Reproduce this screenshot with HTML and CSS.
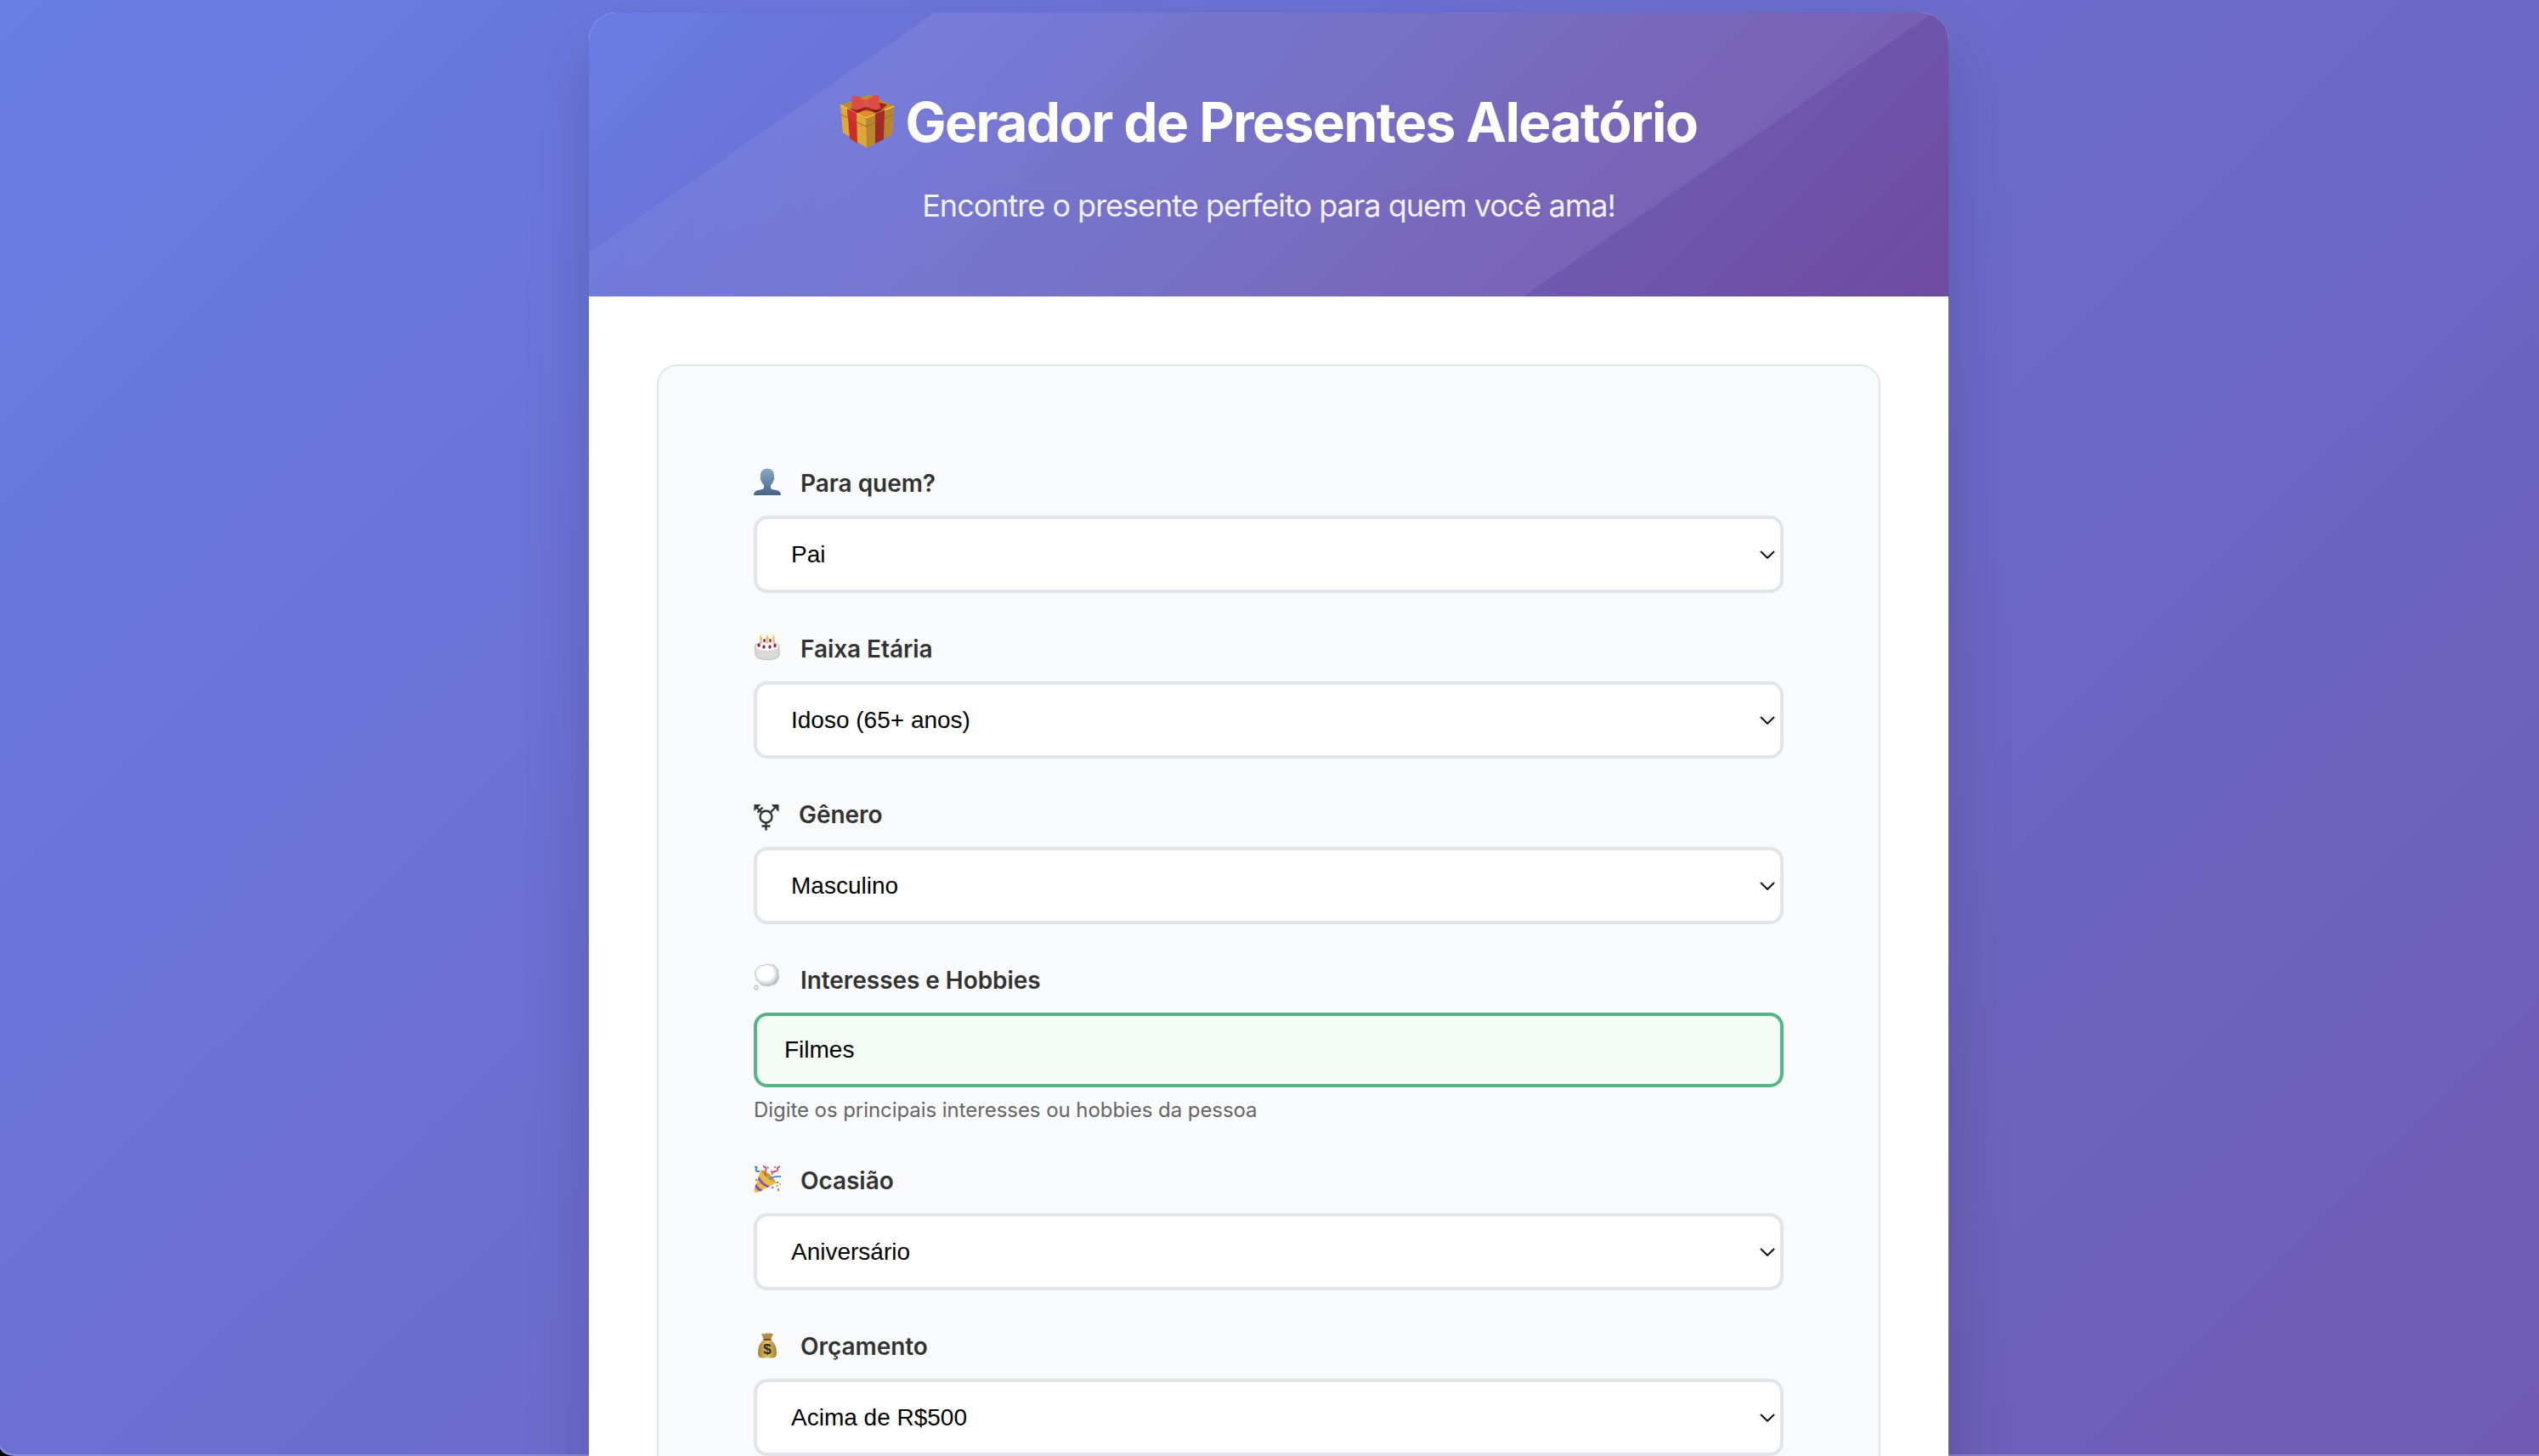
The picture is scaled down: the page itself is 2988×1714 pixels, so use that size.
FILE: index.html
```html
<!DOCTYPE html>
<html lang="pt-BR">
<head>
<meta charset="utf-8">
<title>Gerador de Presentes Aleatório</title>
<link rel="stylesheet" href="styles.css">
</head>
<body>
<div class="page">
<main class="container">
  <header class="header">
    <h1 class="title">
      <svg class="gift" viewBox="0 0 64 64">
        <path d="M0 13 32 1 63 14 61 47 31 63 3 45Z" fill="#d6a03a"/>
        <path d="M0 13 30 26 31 63 3 45Z" fill="#dea73c"/>
        <path d="M30 26 63 14 61 47 31 63Z" fill="#b98630"/>
        <path d="M0 13 34 0 63 14 30 29Z" fill="#bd8c2d"/>
        <path d="M10 18 36 7 55 12 45 22 30 29Z" fill="#a5201f"/>
        <path d="M19 23 31 17 41 22 30 28Z" fill="#e08b2f"/>
        <path d="M8 17 19 22 20 58 11 52Z" fill="#c92f29"/>
        <path d="M41 22 52 18 51 53 41 58Z" fill="#9e2b27"/>
        <path d="M1 24 30 38 62 24" fill="none" stroke="#9b6c20" stroke-width="1"/>
        <path d="M0 13 30 28 63 14" fill="none" stroke="#f1ca45" stroke-width="1.4"/>
        <path d="M8 17 19 22 19 34 9 29Z" fill="#cf3430"/>
        <path d="M41 23 52 18 52 30 41 34Z" fill="#a32b28"/>
        <path d="M30 17 36 19 48 17 44 21 30 19 16 20Z" fill="#5e1a14" opacity=".6"/>
        <path d="M14 3Q16-1 29 7V15Q20 20 13 17Z" fill="#dc4b46"/>
        <path d="M45 1Q42-1 31 7V15Q40 20 47 17Z" fill="#dc4b46"/>
        <circle cx="30" cy="10.500" r="4.500" fill="#e0534c"/>
      </svg>
      <span>Gerador de Presentes Aleatório</span>
    </h1>
    <p class="subtitle"><span>Encontre o presente perfeito para quem você ama!</span></p>
  </header>
  <form class="form">
    <div class="field">
      <div class="label">
        <svg class="icon" viewBox="0 0 32 32">
          <defs><linearGradient id="bust" x1="0" y1="0" x2="0" y2="1"><stop offset="0" stop-color="#88a8c6"/><stop offset="1" stop-color="#476488"/></linearGradient></defs>
          <path d="M16 .5C21 .5 24 4 24 9V11Q25 13 23.500 14.500 22.500 18 20 20V23Q20 24.500 22 25L27.500 26.300Q32 27.500 32 32H0Q0 27.500 4.500 26.300L10 25Q12 24.500 12 23V20Q9.500 18 8.500 14.500 7 13 8 11V9C8 4 11 .5 16 .5Z" fill="url(#bust)"/>
        </svg>
        <span>Para quem?</span>
      </div>
      <div class="select"><span>Pai</span><svg class="chevron" viewBox="0 0 18 10"><path d="M1 1 9 8.800 17 1"/></svg></div>
    </div>
    <div class="field">
      <div class="label">
        <svg class="icon icon-cake" viewBox="0 0 32 32">
          <path d="M1.500 14Q2 9 16 9T30 14V24Q29 29.500 16 29.500T2 24Z" fill="#dcdad8" stroke="#aaa6a2" stroke-width=".7"/>
          <ellipse cx="16" cy="14" rx="13" ry="5" fill="#fff"/>
          <path d="M8.500 3V11M16 3V11M23.500 3V11" stroke="#cfcbb0" stroke-width="3"/>
          <path d="M8.500 0 10 3.500Q10.500 5.500 8.500 5.500T7 3.500ZM16 0 17.500 3.500Q18 5.500 16 5.500T14.500 3.500ZM23.500 0 25 3.500Q25.500 5.500 23.500 5.500T22 3.500Z" fill="#e9cd4c"/>
          <g fill="#a51c39"><ellipse cx="12.500" cy="7" rx="1.400" ry="2"/><ellipse cx="19.500" cy="7" rx="1.400" ry="2"/><ellipse cx="6" cy="12.500" rx="1.700" ry="2.300"/><ellipse cx="12" cy="14.500" rx="1.700" ry="2.300"/><ellipse cx="19" cy="14.500" rx="1.700" ry="2.300"/><ellipse cx="25" cy="13" rx="1.700" ry="2.300"/></g>
        </svg>
        <span>Faixa Etária</span>
      </div>
      <div class="select"><span>Idoso (65+ anos)</span><svg class="chevron" viewBox="0 0 18 10"><path d="M1 1 9 8.800 17 1"/></svg></div>
    </div>
    <div class="field">
      <div class="label label-gender">
        <svg class="icon icon-gender" viewBox="0 0 30 32">
          <g fill="none" stroke="#333" stroke-width="2.400"><circle cx="14.500" cy="15.500" r="7"/><path d="M14.500 22.500V31.500M9.500 26.500H19.500M19.500 10.500 27 3M9.500 10.500 3 4M4.500 10.500 10.500 4.500"/></g>
          <path d="M.5 1H8.500L.5 9ZM29.500 1V9.500L26.500 7.500V4H23L21 1Z" fill="#333"/>
        </svg>
        <span>Gênero</span>
      </div>
      <div class="select"><span>Masculino</span><svg class="chevron" viewBox="0 0 18 10"><path d="M1 1 9 8.800 17 1"/></svg></div>
    </div>
    <div class="field">
      <div class="label">
        <svg class="icon icon-cloud" viewBox="0 0 32 32">
          <defs><radialGradient id="cloud" cx=".43" cy=".4" r=".6"><stop offset=".55" stop-color="#fff"/><stop offset="1" stop-color="#b9babd"/></radialGradient></defs>
          <path d="M5 4Q8 .5 12 1.500 15-1 19 1 25 0 26 4 30 6 28.500 11 31 16 28 19 27 24 22 24 18 27 14 25 8 26 7 21 2 20 2.500 14 0 8 5 4Z" fill="url(#cloud)" stroke="#b5b6b9" stroke-width=".8"/>
          <circle cx="3" cy="27.500" r="2.300" fill="#f2f2f2" stroke="#999" stroke-width=".8"/>
        </svg>
        <span>Interesses e Hobbies</span>
      </div>
      <div class="input">Filmes</div>
      <small class="help"><span>Digite os principais interesses ou hobbies da pessoa</span></small>
    </div>
    <div class="field">
      <div class="label">
        <svg class="icon" viewBox="0 0 32 32">
          <path d="M8.500 5Q20 8 26.500 20.500L5 31.500Q0 33 .5 28.500Z" fill="#e5bd42"/>
          <path d="M8.500 5Q20 8 26.500 20.500L21 18Q12 13 8.500 5Z" fill="#c99c30"/>
          <path d="M6.500 13Q10 21 19 24.500L16 26Q8 22 5 16ZM3 21.500Q5 26.500 10.500 29L7.500 30.500Q3 28.500 1.500 25Z" fill="#8a48c4"/>
          <g fill="none" stroke-width="1.800"><path d="M1 2Q5 1 3 4T7 7" stroke="#3f6fd8"/><path d="M11 1Q16 2 14 6T15 12M22 11Q21 7 25 7T28 3L31 1" stroke="#dc4766"/><path d="M18 16Q24 12 32 13" stroke="#5487dc"/></g>
          <path d="M15.500 1.500h2v2h-2z" fill="#4b7ce0"/><path d="M20 6h2v2h-2zM24 1h2v2h-2zM2 16h2v2H2zM28 27h2v3h-2z" fill="#df6d83"/><path d="M27 19h2v2h-2zM21 25h2v2h-2z" fill="#4b7ce0"/><path d="M30 21h2v2h-2zM26 23h3v2h-3z" fill="#e2b45a"/>
        </svg>
        <span>Ocasião</span>
      </div>
      <div class="select"><span>Aniversário</span><svg class="chevron" viewBox="0 0 18 10"><path d="M1 1 9 8.800 17 1"/></svg></div>
    </div>
    <div class="field">
      <div class="label">
        <svg class="icon icon-bag" viewBox="0 0 32 32">
          <defs><linearGradient id="bag"><stop offset="0" stop-color="#a3802c"/><stop offset=".5" stop-color="#e6c562"/><stop offset="1" stop-color="#a67d2b"/></linearGradient></defs>
          <path d="M12 9H20Q27 14 27 25 27 30.500 22 30.500H10Q5 30.500 5 25 5 14 12 9Z" fill="url(#bag)"/>
          <path d="M9 2 13 2.500 15 1 17 2.500 19 1 20 2 23 2 20 9H12Z" fill="#b28b43"/>
          <path d="M11.500 9H20.500" stroke="#76501f" stroke-width="2"/>
          <text class="dollar" x="16" y="26" text-anchor="middle">$</text>
        </svg>
        <span>Orçamento</span>
      </div>
      <div class="select"><span>Acima de R$500</span><svg class="chevron" viewBox="0 0 18 10"><path d="M1 1 9 8.800 17 1"/></svg></div>
    </div>
  </form>
</main>
<svg class="corner" viewBox="0 0 18 18"><path d="M0 9Q3 17 18 18H0Z"/><path class="corner-edge" d="M0 7Q4 16.500 18 17"/></svg>
</div>
</body>
</html>
```
FILE: styles.css
```css
* { box-sizing: border-box; }
body { margin: 0; }
.page {
  position: relative;
  height: 1714px;
  padding: 15px 695px 0 693px;
  overflow: hidden;
  font-family: Inter, "Noto Sans", sans-serif;
  background:
    linear-gradient(rgba(255, 255, 255, .2), rgba(255, 255, 255, .2)) 18px 1712px / 100% 2px no-repeat,
    linear-gradient(135deg, #697de4 0%, #714c9f 100%) 0 0 / 100% 3730px no-repeat;
}
.container {
  height: 3600px;
  background: #fff;
  border-radius: 32px;
  overflow: hidden;
  box-shadow: 0 40px 80px rgba(0, 0, 0, .16);
}
.header {
  position: relative;
  height: 334px;
  padding-top: 90px;
  color: #fff;
  text-align: center;
  background: linear-gradient(135deg, #697de4 0%, #6f4b9f 100%);
}
.header::before {
  content: "";
  position: absolute;
  inset: 0;
  background: linear-gradient(90deg, rgba(255, 255, 255, .045), rgba(255, 255, 255, .08) 25%, rgba(255, 255, 255, .07));
  clip-path: polygon(407px 0, 1582px 0, 1100px 334px, 0 334px, 0 282px);
}
.title {
  position: relative;
  display: flex;
  justify-content: center;
  align-items: center;
  gap: 13px;
  height: 78px;
  margin: 0;
  font-size: 64px;
  font-weight: 700;
  line-height: 78px;
  letter-spacing: -1.57px;
  white-space: nowrap;
}
.gift { width: 64px; height: 64px; margin-bottom: 2px; }
.subtitle {
  position: relative;
  margin: 37px 0 0;
  font-size: 36px;
  line-height: 44px;
  letter-spacing: -1px;
  opacity: .9;
}
.form {
  display: flex;
  flex-direction: column;
  gap: 48px;
  height: 3000px;
  margin: 80px;
  padding: 120px 112px;
  background: #f9fafc;
  border: 2px solid #e2e5ea;
  border-radius: 24px;
}
.label {
  display: flex;
  gap: 23px;
  height: 40px;
  margin-bottom: 16px;
  color: #333;
  font-size: 28px;
  font-weight: 600;
  line-height: 36px;
  letter-spacing: -.05px;
  white-space: nowrap;
}
.icon { width: 32px; height: 32px; flex: none; overflow: visible; }
.icon-cake { margin-top: 1px; }
.icon-cloud { margin-top: -1px; }
.icon-bag { margin-top: 1px; }
.icon-gender { width: 30px; height: 32px; margin-top: 5px; }
.dollar { font: 700 17px "Liberation Sans", sans-serif; letter-spacing: 0; fill: #2e2917; }
.select, .input {
  display: flex;
  align-items: center;
  height: 91px;
  background: #fff;
  border: 4px solid #e2e4ea;
  border-radius: 16px;
  color: #000;
  font: 28px/36px "Liberation Sans", Arial, sans-serif;
}
.select { justify-content: space-between; padding: 0 6px 0 40px; }
.chevron { width: 18px; height: 10px; fill: none; stroke: #111; stroke-width: 2; }
.input {
  height: 88px;
  padding: 0 32px;
  background: #f3fdf5;
  border-color: #55b586;
}
.help {
  display: block;
  height: 44px;
  padding-top: 10px;
  color: #666;
  font-size: 24px;
  line-height: 34px;
  letter-spacing: -.06px;
  white-space: nowrap;
}
.corner { position: absolute; left: 0; bottom: 0; width: 18px; height: 18px; }
.corner-edge { fill: none; stroke: #8b8fe0; stroke-width: 2; }
```
